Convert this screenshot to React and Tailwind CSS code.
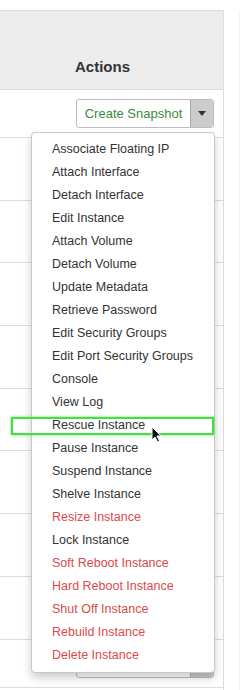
import React from 'react';

const items = [
  ['Associate Floating IP', false],
  ['Attach Interface', false],
  ['Detach Interface', false],
  ['Edit Instance', false],
  ['Attach Volume', false],
  ['Detach Volume', false],
  ['Update Metadata', false],
  ['Retrieve Password', false],
  ['Edit Security Groups', false],
  ['Edit Port Security Groups', false],
  ['Console', false],
  ['View Log', false],
  ['Rescue Instance', false],
  ['Pause Instance', false],
  ['Suspend Instance', false],
  ['Shelve Instance', false],
  ['Resize Instance', true],
  ['Lock Instance', false],
  ['Soft Reboot Instance', true],
  ['Hard Reboot Instance', true],
  ['Shut Off Instance', true],
  ['Rebuild Instance', true],
  ['Delete Instance', true],
];

const rowHeights = ['h-[48px]', 'h-[63px]', 'h-[62px]', 'h-[63px]', 'h-[63px]', 'h-[62px]', 'h-[63px]', 'h-[63px]', 'h-[63px]', 'h-[48px]'];

function SplitButton() {
  return (
    <div className="flex h-[29px] w-[138px] rounded-[3px] border border-[#bdbdbd] bg-white">
      <div className="flex flex-1 items-center justify-center text-[13px] text-[#3b8b3b]">Create Snapshot</div>
      <div className="flex w-[23px] items-center justify-center rounded-r-[3px] border-l border-[#a8a8a8] bg-[#cccccc]">
        <svg width="8" height="5" viewBox="0 0 8 5"><path d="M0 0h8L4 5z" fill="#333" /></svg>
      </div>
    </div>
  );
}

export default function App() {
  return (
    <div className="relative h-[690px] w-[241px] overflow-hidden bg-white pt-[10px] font-['Liberation_Sans',Arial,sans-serif]">
      <div className="flex h-full">
        <div className="w-[224px] border-r border-[#dcdcdc]">
          <div className="flex h-[80px] items-end border-y border-[#dcdcdc] bg-[#ececec] pb-[11px] pl-[75px]">
            <span className="text-[15px] font-bold text-[#333]">Actions</span>
          </div>
          {rowHeights.map((h, i) => (
            <div key={i} className={`${h} flex items-center justify-end border-b border-[#dcdcdc] pr-[9px]`}>
              <SplitButton />
            </div>
          ))}
        </div>
        <div className="ml-[15px] w-px bg-[#f2f2f2]" />
      </div>

      <ul className="absolute left-[31px] top-[132px] w-[184px] rounded-[4px] border border-[#c8c8c8] bg-white py-[5px] shadow-[0_5px_10px_rgba(0,0,0,0.2)]">
        {items.map(([label, danger]) => (
          <li
            key={label}
            className={`flex h-[23px] items-center pl-[20px] text-[12.5px] ${danger ? 'text-[#dc4a4a]' : 'text-[#333]'}`}
          >
            {label}
          </li>
        ))}
      </ul>

      {/* highlight annotation */}
      <div className="absolute left-[11px] top-[417px] h-[18px] w-[203px] border-2 border-[#3fe03f] shadow-[0_0_3px_rgba(60,220,60,0.7)]" />
      <svg className="absolute left-[151px] top-[426px]" width="12" height="17" viewBox="0 0 12 17">
        <path d="M1 1v13l3-3 2.5 5 2-1-2.5-5H10z" fill="#111" stroke="#fff" strokeWidth="1" />
      </svg>
    </div>
  );
}
